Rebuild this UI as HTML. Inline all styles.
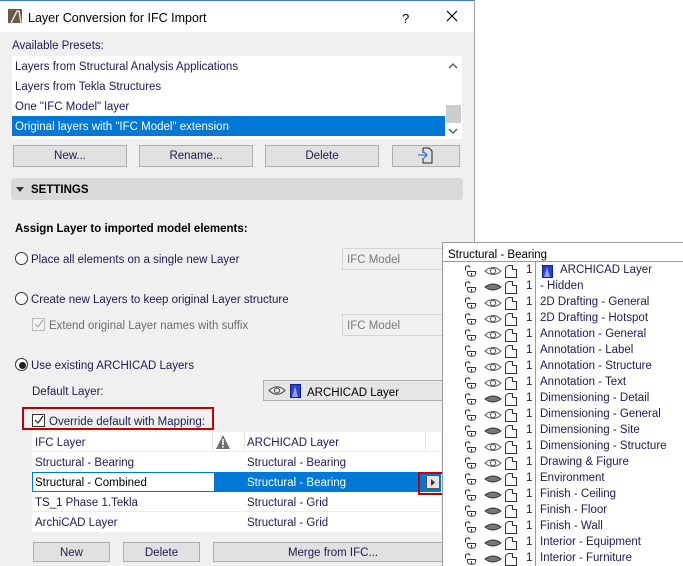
<!DOCTYPE html>
<html><head><meta charset="utf-8"><style>
*{margin:0;padding:0;box-sizing:border-box}
body{width:683px;height:566px;overflow:hidden;background:#fff;font-family:"Liberation Sans",sans-serif;font-size:11.5px;color:#1f1a55;position:relative}
.a{position:absolute;white-space:nowrap}
.x{margin-top:2px}
.btn{position:absolute;background:#e1e1e1;border:1px solid #adadad;text-align:center;line-height:21px;color:#1f1a55}
.fld{position:absolute;background:#f0f0f0;border:1px solid #d5d5d5;color:#7a7a7a;padding-left:4px;line-height:22px}
.radio{position:absolute;width:13px;height:13px;border:1px solid #333;border-radius:50%;background:#fff}
.row{position:absolute;left:0;width:241px;height:16px}
.row svg{position:absolute;display:block}
.row .t{position:absolute;left:98px;top:2px;white-space:nowrap}
.row .n{position:absolute;left:84px;top:2px}
</style></head><body>
<div class="a" style="left:0;top:0;width:475px;height:1px;background:#3b78c4"></div>
<div class="a" style="left:8px;top:9px;width:14px;height:14px;background:#6b5a48"></div>
<svg class="a" style="left:8px;top:9px" width="14" height="14"><path d="M3 14 L9 2 L11 2 L13 14" fill="none" stroke="#e8dcc8" stroke-width="1.5"/></svg>
<div class="a x" style="left:28px;top:9px;font-size:12.5px;color:#000">Layer Conversion for IFC Import</div>
<div class="a x" style="left:402px;top:9px;font-size:13px;color:#000">?</div>
<svg class="a" style="left:446px;top:10px" width="12" height="12"><path d="M1 1L11 11M11 1L1 11" stroke="#000" stroke-width="1.2"/></svg>
<div class="a" style="left:0;top:32px;width:474px;height:534px;background:#f0f0f0"></div>
<div class="a" style="left:474px;top:0;width:1px;height:566px;background:#a0a0a0"></div>
<div class="a x" style="left:12px;top:38px">Available Presets:</div>
<div class="a" style="left:12px;top:56px;width:450px;height:83px;background:#fff"></div>
<div class="a x" style="left:15px;top:59px">Layers from Structural Analysis Applications</div>
<div class="a x" style="left:15px;top:79px">Layers from Tekla Structures</div>
<div class="a x" style="left:15px;top:99px">One "IFC Model" layer</div>
<div class="a" style="left:12px;top:116px;width:433px;height:20px;background:#0078d7"></div>
<div class="a x" style="left:15px;top:119px;color:#fff">Original layers with "IFC Model" extension</div>
<div class="a" style="left:446px;top:105px;width:15px;height:18px;background:#cdcdcd"></div>
<svg class="a" style="left:448px;top:62px" width="10" height="8"><path d="M1 6L5 2L9 6" fill="none" stroke="#606060" stroke-width="1.5"/></svg>
<svg class="a" style="left:448px;top:127px" width="10" height="8"><path d="M1 2L5 6L9 2" fill="none" stroke="#606060" stroke-width="1.5"/></svg>
<div class="btn" style="left:13px;top:145px;width:114px;height:22px">New...</div>
<div class="btn" style="left:139px;top:145px;width:114px;height:22px">Rename...</div>
<div class="btn" style="left:265px;top:145px;width:114px;height:22px">Delete</div>
<div class="btn" style="left:392px;top:145px;width:68px;height:22px"></div>
<svg class="a" style="left:417px;top:147px" width="18" height="18"><path d="M6 1H12L15 4V16H6V11M6 6V1" fill="none" stroke="#222" stroke-width="1"/><path d="M1 8H10M7 5L10 8L7 11" fill="none" stroke="#2b7de9" stroke-width="1.3"/></svg>
<div class="a" style="left:11px;top:178px;width:452px;height:22px;background:#d9d9d9;border-radius:3px"></div>
<svg class="a" style="left:16px;top:187px" width="9" height="6"><path d="M0 0H8L4 5Z" fill="#333"/></svg>
<div class="a x" style="left:31px;top:182px;font-weight:bold;color:#000">SETTINGS</div>
<div class="a x" style="left:15px;top:221px;font-weight:bold;color:#000">Assign Layer to imported model elements:</div>
<div class="radio" style="left:15px;top:252px"></div>
<div class="a x" style="left:31px;top:252px">Place all elements on a single new Layer</div>
<div class="fld" style="left:342px;top:248px;width:110px;height:22px">IFC Model</div>
<div class="radio" style="left:15px;top:292px"></div>
<div class="a x" style="left:31px;top:292px">Create new Layers to keep original Layer structure</div>
<div class="a" style="left:32px;top:318px;width:13px;height:13px;border:1px solid #bbb;background:#f4f4f4"></div>
<svg class="a" style="left:34px;top:319px" width="10" height="10"><path d="M1 5L4 8L9 1" fill="none" stroke="#aaa" stroke-width="1.2"/></svg>
<div class="a x" style="left:49px;top:318px;color:#6d6d6d">Extend original Layer names with suffix</div>
<div class="fld" style="left:342px;top:314px;width:110px;height:22px">IFC Model</div>
<div class="radio" style="left:15px;top:358px"></div>
<div class="a" style="left:19px;top:362px;width:7px;height:7px;border-radius:50%;background:#222"></div>
<div class="a x" style="left:31px;top:358px">Use existing ARCHICAD Layers</div>
<div class="a x" style="left:32px;top:384px">Default Layer:</div>
<div class="a" style="left:263px;top:380px;width:190px;height:21px;background:#e5e5e5;border:1px solid #adadad"></div>
<svg class="a" style="left:268px;top:385px" width="18" height="11"><path d="M1 5.5Q9 -2 17 5.5Q9 13 1 5.5Z" fill="none" stroke="#444"/><circle cx="9" cy="5.5" r="2.5" fill="none" stroke="#444"/></svg>
<svg class="a" style="left:290px;top:384px" width="11" height="14"><rect x="0.5" y="0.5" width="10" height="13" fill="#2a3fd6" stroke="#102080"/><path d="M2 13L5 2L8 13Z" fill="#8fa0ff"/></svg>
<div class="a x" style="left:307px;top:385px;color:#000">ARCHICAD Layer</div>
<div class="a" style="left:22px;top:407px;width:192px;height:23px;border:2px solid #c00000"></div>
<div class="a" style="left:32px;top:414px;width:13px;height:13px;border:1px solid #333;background:#fff"></div>
<svg class="a" style="left:34px;top:415px" width="10" height="10"><path d="M1 5L4 8L9 1" fill="none" stroke="#222" stroke-width="1.2"/></svg>
<div class="a x" style="left:49px;top:414px">Override default with Mapping:</div>
<div class="a" style="left:32px;top:432px;width:409px;height:100px;background:#fff"></div>
<div class="a" style="left:212px;top:432px;width:1px;height:20px;background:#e0e0e0"></div>
<div class="a" style="left:244px;top:432px;width:1px;height:20px;background:#e0e0e0"></div>
<div class="a" style="left:425px;top:432px;width:1px;height:20px;background:#e0e0e0"></div>
<div class="a" style="left:32px;top:451px;width:409px;height:1px;background:#ececec"></div>
<div class="a" style="left:32px;top:491px;width:409px;height:1px;background:#ececec"></div>
<div class="a" style="left:32px;top:511px;width:409px;height:1px;background:#ececec"></div>
<div class="a x" style="left:35px;top:435px">IFC Layer</div>
<svg class="a" style="left:215px;top:434px" width="16" height="16"><path d="M8 1L15 15H1Z" fill="#6e6e6e"/><rect x="7.2" y="5" width="1.6" height="6" fill="#fff"/><rect x="7.2" y="12" width="1.6" height="1.6" fill="#fff"/></svg>
<div class="a x" style="left:247px;top:435px">ARCHICAD Layer</div>
<div class="a x" style="left:35px;top:455px">Structural - Bearing</div>
<div class="a x" style="left:247px;top:455px">Structural - Bearing</div>
<div class="a" style="left:32px;top:472px;width:409px;height:20px;background:#0078d7"></div>
<div class="a" style="left:33px;top:473px;width:181px;height:18px;background:#fff"></div>
<div class="a x" style="left:35px;top:475px;color:#000">Structural - Combined</div>
<div class="a x" style="left:247px;top:475px;color:#fff">Structural - Bearing</div>
<div class="a" style="left:426px;top:475px;width:14px;height:14px;background:#e5e5e5;border:1px solid #555"></div>
<svg class="a" style="left:431px;top:479px" width="5" height="7"><path d="M0 0L4 3.5L0 7Z" fill="#333"/></svg>
<div class="a" style="left:418px;top:472px;width:29px;height:23px;border:2px solid #c00000"></div>
<div class="a x" style="left:35px;top:495px">TS_1 Phase 1.Tekla</div>
<div class="a x" style="left:247px;top:495px">Structural - Grid</div>
<div class="a x" style="left:35px;top:515px">ArchiCAD Layer</div>
<div class="a x" style="left:247px;top:515px">Structural - Grid</div>
<div class="btn" style="left:33px;top:542px;width:77px;height:20px;line-height:20px">New</div>
<div class="btn" style="left:123px;top:542px;width:77px;height:20px;line-height:20px">Delete</div>
<div class="btn" style="left:213px;top:542px;width:240px;height:20px;line-height:20px">Merge from IFC...</div>
<div class="a" style="left:442px;top:242px;width:241px;height:324px;background:#fff;border-left:1px solid #999;border-top:1px solid #999"></div>
<div class="a x" style="left:448px;top:247px;color:#000">Structural - Bearing</div>
<div class="a" style="left:443px;top:261px;width:240px;height:1px;background:#999"></div>
<div class="a" style="left:535px;top:262px;width:1px;height:304px;background:#999"></div>
<div id="rows" class="a" style="left:442px;top:262px;width:241px;height:304px"></div>
<script>
var items=[["ARCHICAD Layer",0,1],["- Hidden",1],["2D Drafting - General",0],["2D Drafting - Hotspot",0],["Annotation - General",0],["Annotation - Label",0],["Annotation - Structure",0],["Annotation - Text",0],["Dimensioning - Detail",1],["Dimensioning - General",0],["Dimensioning - Site",1],["Dimensioning - Structure",0],["Drawing & Figure",0],["Environment",1],["Finish - Ceiling",1],["Finish - Floor",1],["Finish - Wall",1],["Interior - Equipment",1],["Interior - Furniture",1]];
var h="";
items.forEach(function(it,i){
var eye=it[1]?'<path d="M1 6Q9 0 17 6Q9 12 1 6Z" fill="#777" stroke="#333"/>':'<path d="M1 6Q9 -1 17 6Q9 13 1 6Z" fill="none" stroke="#555"/><circle cx="9" cy="6" r="2.6" fill="none" stroke="#555"/>';
h+='<div class="row" style="top:'+(i*16)+'px">'+
'<svg style="left:21px;top:2px" width="14" height="14"><path d="M2.5 6.5V4C2.5 1.5 6.5 1 7 3.5" fill="none" stroke="#333"/><path d="M4.5 7.5H12.5V10C12.5 13 4.5 13 4.5 10Z" fill="#fff" stroke="#333"/><rect x="8" y="9" width="1" height="2.5" fill="#333"/></svg>'+
'<svg style="left:42px;top:3px" width="18" height="12">'+eye+'</svg>'+
'<svg style="left:62px;top:2px" width="14" height="14"><path d="M1.5 3.5V13.5H12.5V5.5H8.5V1.5H4.5L1.5 3.5Z M8.5 5.5V1.5" fill="none" stroke="#333"/></svg>'+
'<span class="n">1</span>'+
(it[2]?'<svg style="left:100px;top:3px" width="11" height="13"><rect x="0.5" y="0.5" width="10" height="12" fill="#2a3fd6" stroke="#102080"/><path d="M2 12L5 2L8 12Z" fill="#8fa0ff"/></svg><span class="t" style="left:118px">'+it[0]+'</span>':'<span class="t">'+it[0].replace("&","&amp;")+'</span>')+
'</div>';});
document.getElementById("rows").innerHTML=h;
</script>
</body></html>
